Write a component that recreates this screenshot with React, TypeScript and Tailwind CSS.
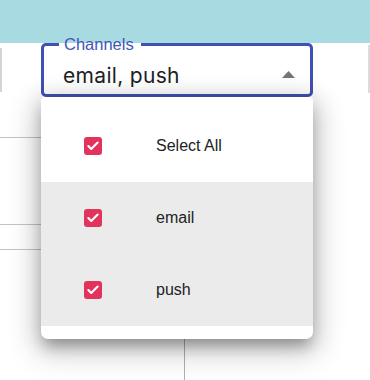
import { Check } from "lucide-react";

const options = [
  { label: "Select All", active: false },
  { label: "email", active: true },
  { label: "push", active: true },
];

function Box() {
  return (
    <span className="flex h-[18px] w-[18px] items-center justify-center rounded-[3px] bg-[#e2335d]">
      <Check size={14} strokeWidth={3.6} className="text-white" />
    </span>
  );
}

export default function App() {
  return (
    <div className="relative h-[380px] w-[370px] overflow-hidden bg-white font-['Liberation_Sans',Arial,sans-serif]">
      {/* top bar */}
      <div className="h-[43px] bg-[#a8dbe1]" />

      {/* select row */}
      <div className="flex h-[54px] items-start">
        <div className="mt-[5px] h-[44px] w-[2px] bg-[#d4d4d4]" />
        <fieldset className="relative -mt-[7px] ml-[39px] h-[61px] w-[272px] rounded-[5px] border-[3px] border-[#3f51b5]">
          <legend className="ml-[15px] pl-[5px] pr-[7px] text-[16.5px] leading-[16px] text-[#4456bb]">
            Channels
          </legend>
          <div className="flex h-[48px] items-center pl-[19px] pr-[15px]">
            <span className="font-['Inter',sans-serif] text-[21px] tracking-[0.015em] text-[#222]">
              email, push
            </span>
            <svg width="13" height="7" viewBox="0 0 13 7" className="ml-auto -mt-[3px]">
              <polygon points="0,7 6.5,0 13,7" fill="#757575" />
            </svg>
          </div>
        </fieldset>
        <div className="ml-auto mt-[2px] h-[48px] w-[2px] bg-[#dcdcdc]" />
      </div>

      {/* table lines behind the menu */}
      <div className="mt-[40px] h-px w-[60px] bg-[#c4c4c4]" />
      <div className="mt-[86px] h-px w-[60px] bg-[#c4c4c4]" />
      <div className="mt-[24px] h-px w-[60px] bg-[#c4c4c4]" />
      <div className="ml-[184px] mt-[89px] h-[41px] w-px bg-[#b0b0b0]" />

      {/* dropdown menu */}
      <div className="absolute left-[41px] top-[97px] w-[272px] rounded-b-[7px] rounded-t-[4px] bg-white py-[13px] shadow-[0px_10px_14px_-4px_rgba(0,0,0,0.28),0px_10px_30px_6px_rgba(0,0,0,0.16),0px_4px_20px_4px_rgba(0,0,0,0.12)]">
        {options.map((o) => (
          <div
            key={o.label}
            className={`flex h-[72px] items-center pl-[43px] ${o.active ? "bg-[#ebebeb]" : ""}`}
          >
            <Box />
            <span className="ml-[54px] text-[16px] text-[#222]">{o.label}</span>
          </div>
        ))}
      </div>
    </div>
  );
}
